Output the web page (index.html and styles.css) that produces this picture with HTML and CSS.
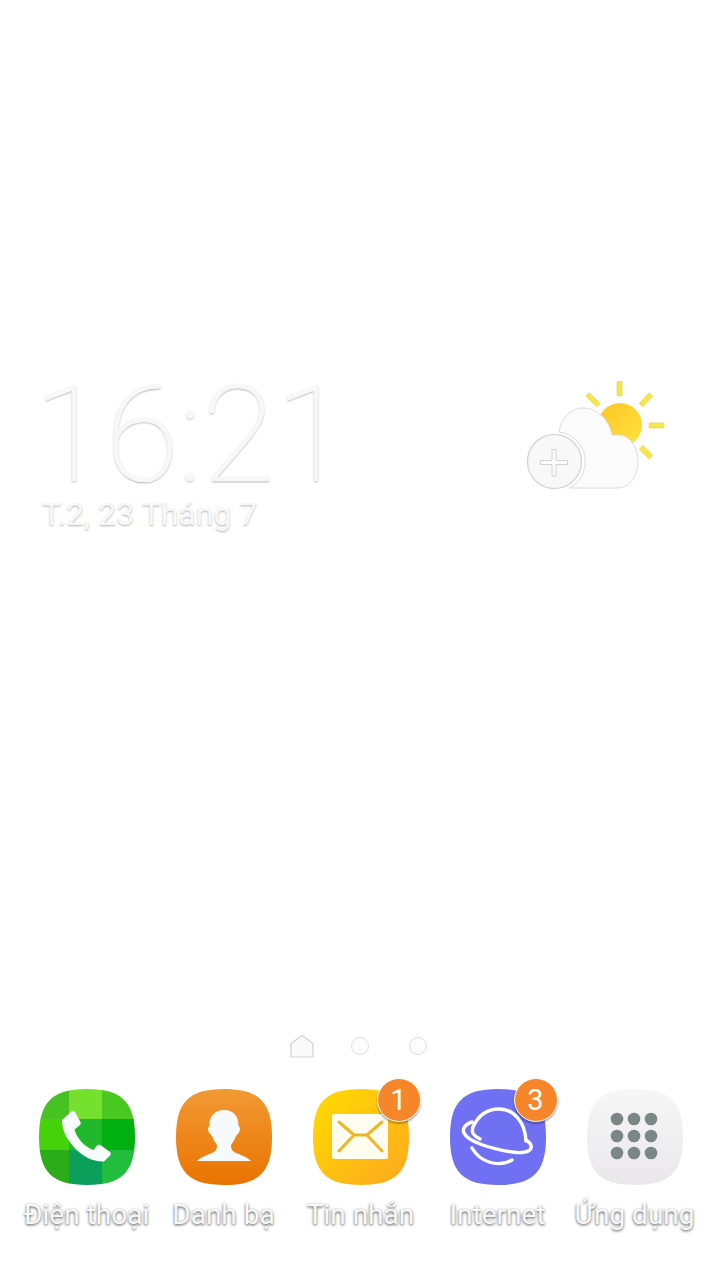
FILE: index.html
```html
<!DOCTYPE html>
<html lang="vi">
<head>
  <meta charset="UTF-8">
  <title>Home screen</title>
  <link rel="stylesheet" href="styles.css">
</head>
<body>
  <svg class="defs" width="0" height="0">
    <defs>
      <clipPath id="squircle">
        <path d="M48 0C83 0 96 13 96 48S83 96 48 96S0 83 0 48S13 0 48 0Z"/>
      </clipPath>
      <linearGradient id="orangeFill" x1="0" y1="0" x2="0" y2="1">
        <stop offset="0" stop-color="#f19a34"/>
        <stop offset="1" stop-color="#ea7300"/>
      </linearGradient>
      <linearGradient id="yellowFill" x1="0" y1="0" x2="1" y2="1">
        <stop offset="0" stop-color="#ffdc00"/>
        <stop offset="1" stop-color="#fea81f"/>
      </linearGradient>
      <linearGradient id="greyFill" x1="0" y1="0" x2="0" y2="1">
        <stop offset="0" stop-color="#f7f7f7"/>
        <stop offset="1" stop-color="#e9e7ea"/>
      </linearGradient>
      <linearGradient id="sunFill" x1="0" y1="0" x2="1" y2="1">
        <stop offset="0" stop-color="#fdc428"/>
        <stop offset="1" stop-color="#ffe43c"/>
      </linearGradient>
    </defs>
  </svg>

  <div class="screen">
    <section class="widget-row">
      <div class="clock">
        <div class="clock-time">16:21</div>
        <div class="clock-date">T.2, 23 Tháng 7</div>
      </div>
      <svg class="weather" viewBox="0 0 140 112" width="140" height="112">
        <g fill="#f8e64a" stroke="#e6cf3a" stroke-width=".6">
          <rect x="92" y="0" width="5" height="15" rx="1"/>
          <rect x="124" y="42" width="15" height="5" rx="1"/>
          <path d="M64.300 11.700L61 15L71.700 25.700L75 22.300Z"/>
          <path d="M124.300 11.700L127.700 15L117.700 25.700L114.300 22.300Z"/>
          <path d="M117.700 64.300L127.700 74L124.300 78.300L114.300 68.300Z"/>
        </g>
        <circle cx="95" cy="44" r="22" fill="url(#sunFill)"/>
        <path d="M34 51C36 37 46 27 58 27C72 27 84 38 87 54C88 54 91 54 93 54C105 54 113 66 113 81C113 96 104 107 92 107H45Z" fill="#fbfbfb" stroke="#dcdcdc" stroke-width="1"/>
        <circle cx="29.500" cy="80.500" r="30" fill="#fff"/>
        <path d="M34 51A30 30 0 0 1 45 107" fill="none" stroke="#dadada" stroke-width=".9"/>
        <circle cx="29.500" cy="80.500" r="27" fill="#f8f8f8" stroke="#cfcfcf" stroke-width="1.200"/>
        <path d="M27 68.500h4v11h11.500v4h-11.500v11.500h-4v-11.500h-11.500v-4h11.500Z" fill="#fbfbfb" stroke="#c8c8c8" stroke-width=".8"/>
      </svg>
    </section>

    <section class="bottom">
      <div class="pager">
        <svg class="pager-home" viewBox="0 0 24 24" width="24" height="24">
          <path d="M1 9.500L12 1.500L23 9.500V23H1Z" fill="#fafafa" stroke="#d2d2d2" stroke-width="1.200"/>
        </svg>
        <span class="pager-dot"></span>
        <span class="pager-dot pager-dot-last"></span>
      </div>

      <nav class="dock">
        <div class="app">
          <div class="app-icon">
            <svg viewBox="0 0 96 96" width="96" height="96">
              <g clip-path="url(#squircle)">
                <rect width="31" height="31" fill="#46c322"/>
                <rect x="30" width="34" height="31" fill="#76e02e"/>
                <rect x="63" width="33" height="31" fill="#48c820"/>
                <rect y="30" width="31" height="32" fill="#45d20a"/>
                <rect x="30" y="30" width="34" height="32" fill="#22b82c"/>
                <rect x="63" y="30" width="33" height="32" fill="#00b010"/>
                <rect y="61" width="31" height="35" fill="#2aad18"/>
                <rect x="30" y="61" width="34" height="35" fill="#0a9f5a"/>
                <rect x="63" y="61" width="33" height="35" fill="#22bd3c"/>
              </g>
              <path d="M23 31L33 22C34.500 21.500 35.500 22 36 23L41.500 33C42 34.500 41.500 35.500 40.500 36.500L35.500 40.500C38 50 46 58 54.500 61L58 56.500C59 55.500 60.500 55.500 61.500 56L71 63C72 64 72 65.500 71 66.500L65 72.500C55 73 43 68 34 57C27 49 23 40 23 31Z" fill="#f7fbfb"/>
            </svg>
          </div>
          <span class="app-label">Điện thoại</span>
        </div>

        <div class="app">
          <div class="app-icon">
            <svg viewBox="0 0 96 96" width="96" height="96">
              <g clip-path="url(#squircle)">
                <rect width="96" height="96" fill="url(#orangeFill)"/>
              </g>
              <path d="M48 21C38 21 33 28 33.500 37C31.500 38 31.500 42 34 45C35.500 46 35.500 46 36 47C37.500 51 39.500 54 41 56C41 60 40 62 36 64C31 66 25 68 21 72H75C71 68 65 66 60 64C56 62 55 60 55 56C56.500 54 58.500 51 60 47C60.500 46 60.500 46 62 45C64.500 42 64.500 38 62.500 37C63 28 58 21 48 21Z" fill="#f6fafb"/>
            </svg>
          </div>
          <span class="app-label">Danh bạ</span>
        </div>

        <div class="app">
          <div class="app-icon">
            <svg viewBox="0 0 96 96" width="96" height="96">
              <g clip-path="url(#squircle)">
                <rect width="96" height="96" fill="url(#yellowFill)"/>
              </g>
              <rect x="19" y="25" width="56" height="45" rx="2" fill="#fffdf0"/>
              <path d="M26 33L41 46H54L69 33M26 62L41 46M69 62L54 46" fill="none" stroke="#eeb525" stroke-width="3" stroke-linecap="round" stroke-linejoin="round"/>
            </svg>
            <span class="badge">1</span>
          </div>
          <span class="app-label">Tin nhắn</span>
        </div>

        <div class="app">
          <div class="app-icon">
            <svg viewBox="0 0 96 96" width="96" height="96">
              <g clip-path="url(#squircle)">
                <rect width="96" height="96" fill="#6f70f2"/>
              </g>
              <path d="M23 38C28 27 37 20 49 20C64 20 75 33 76 52" fill="none" stroke="#fff" stroke-width="3.400" stroke-linecap="round"/>
              <path d="M22 33C15 35 12 40 14 44C18 53 42 60 62 63C72 64.500 80 63 81 59C82 56 79 53 76 51M23 38C21 44 24 47 30 50" fill="none" stroke="#fff" stroke-width="3.400" stroke-linecap="round"/>
              <path d="M22 59C30 73 48 79 62 71" fill="none" stroke="#fff" stroke-width="3.400" stroke-linecap="round"/>
            </svg>
            <span class="badge">3</span>
          </div>
          <span class="app-label">Internet</span>
        </div>

        <div class="app">
          <div class="app-icon">
            <svg viewBox="0 0 96 96" width="96" height="96">
              <g clip-path="url(#squircle)">
                <rect width="96" height="96" fill="url(#greyFill)"/>
              </g>
              <g fill="#7b8785">
                <circle cx="30" cy="30" r="6.300"/>
                <circle cx="47" cy="30" r="6.300"/>
                <circle cx="64" cy="30" r="6.300"/>
                <circle cx="30" cy="47" r="6.300"/>
                <circle cx="47" cy="47" r="6.300"/>
                <circle cx="64" cy="47" r="6.300"/>
                <circle cx="30" cy="64" r="6.300"/>
                <circle cx="47" cy="64" r="6.300"/>
                <circle cx="64" cy="64" r="6.300"/>
              </g>
            </svg>
          </div>
          <span class="app-label">Ứng dụng</span>
        </div>
      </nav>
    </section>
  </div>
</body>
</html>
```

FILE: styles.css
```css
body {
    margin: 0;
    padding: 0;
    background: #fff;
    font-family: Roboto, "Noto Sans", sans-serif;
}

.defs {
    position: absolute;
}

.screen {
    height: 1280px;
    display: flex;
    flex-direction: column;
    justify-content: space-between;
    box-sizing: border-box;
    padding: 381px 0 48px;
    overflow: hidden;
}

.widget-row {
    display: flex;
    justify-content: space-between;
    align-items: flex-start;
    padding: 0 55px 0 40px;
}

.clock-time {
    margin-left: -7px;
    font-size: 133px;
    font-weight: 100;
    line-height: 110px;
    color: #f8f8f8;
    -webkit-text-stroke: 1.2px #f7f7f7;
    text-shadow: 0 1px 2px rgba(0, 0, 0, 0.45);
}

.clock-date {
    font-size: 32px;
    line-height: 38px;
    padding: 4px 0 0 2px;
    color: #f8f8f8;
    text-shadow: 0 1px 2px rgba(0, 0, 0, 0.3);
}

.pager {
    display: flex;
    align-items: center;
    justify-content: center;
    gap: 37px;
    padding-right: 3px;
    margin-bottom: 31px;
}

.pager-dot {
    width: 16px;
    height: 16px;
    border: 1px solid #dedede;
    border-radius: 50%;
    background: #fdfdfd;
}

.pager-dot-last {
    margin-left: 3px;
}

.dock {
    display: grid;
    grid-template-columns: repeat(5, 137px);
    padding: 0 17px 0 18px;
}

.app {
    display: flex;
    flex-direction: column;
    align-items: center;
    gap: 13px;
}

.app-icon {
    position: relative;
    width: 96px;
    height: 96px;
}

.app-icon svg {
    display: block;
}

.badge {
    position: absolute;
    top: -11px;
    right: -12px;
    width: 42px;
    height: 42px;
    border-radius: 50%;
    background: #f5872a;
    border: 1px solid #fff;
    box-shadow: 0 2px 2px rgba(0, 0, 0, 0.3);
    color: #fff;
    font-size: 29px;
    line-height: 42px;
    text-align: center;
}

.app-label {
    font-size: 28px;
    line-height: 34px;
    white-space: nowrap;
    color: #f8f8f8;
    text-shadow: 0 1px 3px rgba(0, 0, 0, 0.7);
}
```
